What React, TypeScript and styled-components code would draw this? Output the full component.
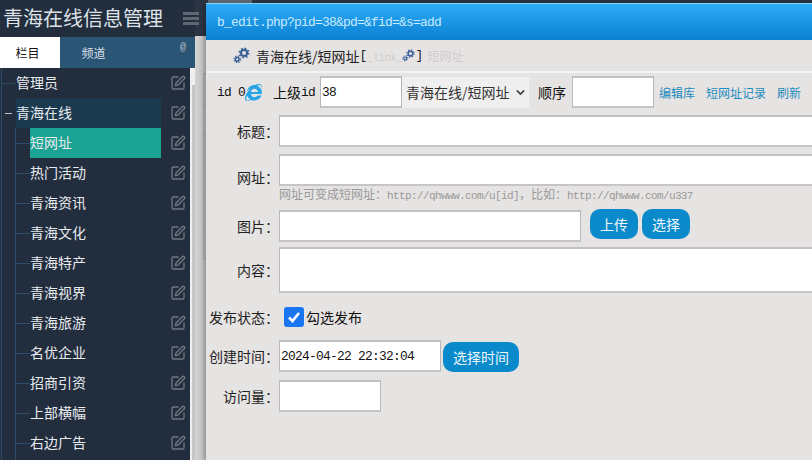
import React from "react";
import styled, { createGlobalStyle } from "styled-components";
import { SquarePen, ChevronDown } from "lucide-react";
import { FaInternetExplorer } from "react-icons/fa";

const cjk = `"Noto Sans CJK SC", "Liberation Sans", sans-serif`;

const Global = createGlobalStyle`
    html, body {
        margin: 0;
        padding: 0;
        width: 812px;
        height: 460px;
        overflow: hidden;
    }
    * { box-sizing: border-box; }
`

const Page = styled.div`
    position: relative;
    display: flex;
    width: 812px;
    height: 460px;
    overflow: hidden;
    font-family: ${ cjk };
    font-size: 14px;
    color: #111;
    background: linear-gradient(180deg, #2b3442 0 36px, #c4c4c4 36px);
`

const Sidebar = styled.div`
    width: 195px;
    flex-shrink: 0;
    display: flex;
    flex-direction: column;
    background: #222d3e;
`

const Brand = styled.div`
    height: 36px;
    display: flex;
    align-items: center;
    justify-content: space-between;
    padding: 0 0 0 3px;
    background: #222d3e;
    color: #dfe3e8;
    font-size: 20px;
    line-height: 34px;
    flex-shrink: 0;
`

const Burger = styled.div`
    width: 16px;
    height: 13px;
    margin-right: 0;
    transform: translateX(4px);
    display: flex;
    flex-direction: column;
    justify-content: space-between;
    span {
        display: block;
        height: 3px;
        background: #5d6672;
    }
`

const Tabs = styled.div`
    height: 31px;
    margin-top: 1px;
    display: flex;
    background: #2b5574;
    position: relative;
    flex-shrink: 0;
`

const Tab = styled.div<{ $on?: boolean }>`
    width: 60px;
    height: 31px;
    display: flex;
    align-items: center;
    justify-content: center;
    font-size: 12px;
    padding: ${ p => p.$on ? "0 5px 0 0" : "0 0 0 7px" };
    background: ${ p => p.$on ? "#fff" : "transparent" };
    color: ${ p => p.$on ? "#111" : "#d5dde4" };
`

const At = styled.span`
    position: absolute;
    right: 9px;
    top: 5px;
    font-size: 10px;
    line-height: 12px;
    font-family: "Liberation Mono", monospace;
    color: #aab8c4;
`

const TreeWrap = styled.div`
    flex: 1;
    display: flex;
    min-height: 0;
`

const Tree = styled.div`
    width: 190px;
    flex-shrink: 0;
    position: relative;
    overflow: hidden;
`

const TreeRow = styled.div`
    height: 30px;
    display: flex;
    align-items: center;
    position: relative;
`

const Line = styled.i<{ $x: number; $w: number; $light?: boolean }>`
    position: absolute;
    left: ${ p => p.$x }px;
    top: 15px;
    width: ${ p => p.$w }px;
    height: 1px;
    background: ${ p => p.$light ? "#b9c2cb" : "#2c4c68" };
`

const Rail = styled.i<{ $x: number; $top: number }>`
    position: absolute;
    left: ${ p => p.$x }px;
    top: ${ p => p.$top }px;
    bottom: 0;
    width: 1px;
    background: #2c4c68;
`

const TreeLabel = styled.div<{ $indent: number; $bg?: string }>`
    margin-left: ${ p => p.$indent }px;
    width: ${ p => 161 - p.$indent }px;
    height: 30px;
    line-height: 29px;
    color: #e8ebee;
    background: ${ p => p.$bg || "transparent" };
`

const EditIcon = styled(SquarePen)`
    position: absolute;
    left: 170px;
    top: 7px;
    color: #6f7782;
`

const Scroll = styled.div`
    width: 5px;
    background: #efefef;
    position: relative;
    &::after {
        content: "";
        position: absolute;
        left: 2px;
        right: 0;
        top: 17px;
        bottom: 0;
        background: #c4c4c4;
    }
`

const Gutter = styled.div`
    width: 11px;
    flex-shrink: 0;
    height: 424px;
    margin-top: 36px;
    padding: 37px 0 0 8px;
    background: linear-gradient(90deg, #d4d4d4, #bcbcbc);
`

const Ghost = styled.div`
    width: 3px;
    height: 186px;
    border: 1px solid #aaa;
    border-right: 0;
    background: repeating-linear-gradient(180deg, transparent 0 30px, #aaa 30px 31px);
`

const Dialog = styled.div`
    position: absolute;
    left: 206px;
    top: 3px;
    width: 800px;
    height: 457px;
    background: #e6e3e3;
    box-shadow: -2px 0 4px rgba(0, 0, 0, .25);
    &::before {
        content: "";
        position: absolute;
        left: 2px;
        top: -3px;
        width: 44px;
        height: 3px;
        background: #5c6672;
    }
`

const TitleBar = styled.div`
    height: 37px;
    border-top: 1px solid #8fd0f8;
    background: linear-gradient(180deg, #2cabf7, #0a80d2);
    color: #c9eaff;
    display: flex;
    align-items: center;
    padding: 1px 0 0 11px;
`

// half-width latin next to the CJK text, like the bitmap font of the page
const Mono = styled.span<{ $size?: number }>`
    font-family: "Liberation Mono", monospace;
    font-size: ${ p => (p.$size || 14) * 0.92 }px;
    letter-spacing: ${ p => -(p.$size || 14) * 0.052 }px;
`

const SubHead = styled.div`
    height: 33px;
    display: flex;
    align-items: center;
    padding-left: 27px;
    border-bottom: 2px solid #f4f3f3;
    color: #222;
    white-space: nowrap;
`

const SubTitle = styled.span`
    margin-left: 6px;
`

const Faint = styled.span<{ $size: number; $gap?: number }>`
    color: #cfcccc;
    font-size: ${ p => p.$size }px;
    margin-left: ${ p => p.$gap || 0 }px;
`

const TopRow = styled.div`
    display: flex;
    align-items: center;
    height: 32px;
    margin-top: 3px;
    padding-left: 11px;
    white-space: nowrap;
`

const Gap = styled.span<{ $gap: number }>`
    margin-left: ${ p => p.$gap }px;
`

const Field = styled.input<{ $w?: number; $gap?: number }>`
    display: block;
    width: ${ p => p.$w ? p.$w + "px" : "560px" };
    height: 32px;
    margin-left: ${ p => p.$gap || 0 }px;
    padding: 0 0 0 1px;
    border: 1px solid #b9b7b7;
    border-top: 2px solid #c2c0c0;
    border-bottom: 2px solid #c6c4c4;
    outline: 0;
    border-radius: 0;
    background: #fff;
    font-family: "Liberation Mono", ${ cjk };
    font-size: 12.88px;
    letter-spacing: -0.73px;
    color: #111;
    flex-shrink: 0;
`

const Area = styled.div<{ $h: number }>`
    width: 560px;
    height: ${ p => p.$h }px;
    background: #fff;
    border: 1px solid #b9b7b7;
    border-top: 2px solid #c2c0c0;
    border-bottom: 2px solid #c6c4c4;
    flex-shrink: 0;
`

const Select = styled.div`
    width: 127px;
    height: 31px;
    background: #f0efef;
    color: #333;
    display: flex;
    align-items: center;
    justify-content: space-between;
    padding: 0 2px 0 4px;
    flex-shrink: 0;
`

const Links = styled.div`
    display: flex;
    margin-left: 5px;
    gap: 11px;
    font-size: 12px;
    color: #1c8cbd;
`

const Form = styled.div`
    display: flex;
    flex-direction: column;
`

const FormRow = styled.div<{ $top: number; $h?: number }>`
    display: flex;
    align-items: center;
    margin-top: ${ p => p.$top }px;
    height: ${ p => p.$h ? p.$h + "px" : "auto" };
`

const Label = styled.label<{ $low?: boolean }>`
    width: 73px;
    text-align: right;
    flex-shrink: 0;
    white-space: nowrap;
    color: #222;
    padding-top: ${ p => p.$low ? 14 : 0 }px;
`

const Hint = styled.div`
    margin: 0 0 0 73px;
    height: 14px;
    line-height: 14px;
    font-size: 12px;
    color: #999;
    white-space: nowrap;
`

const Btn = styled.button<{ $w: number; $gap: number; $low?: boolean }>`
    width: ${ p => p.$w }px;
    height: 30px;
    margin: ${ p => p.$low ? "2px" : "-1px" } 0 0 ${ p => p.$gap }px;
    align-self: flex-start;
    padding: 0;
    border: 0;
    border-radius: 10px;
    background: #0a8acb;
    color: #eef8fd;
    font-family: ${ cjk };
    font-size: 14px;
    flex-shrink: 0;
`

const Check = styled.span`
    width: 20px;
    height: 20px;
    margin: 0 2px 0 5px;
    border-radius: 3px;
    background: #1a75f0;
    display: flex;
    align-items: center;
    justify-content: center;
`

const menu = ["管理员", "青海在线", "短网址", "热门活动", "青海资讯", "青海文化", "青海特产", "青海视界", "青海旅游", "名优企业", "招商引资", "上部横幅", "右边广告"];

const Gears = ({ size }: { size: number }) => (
    <svg width={ size } height={ size } viewBox="0 0 20 20" fill="none" style={{ flexShrink: 0 }}>
        <g stroke="#3a6098">
            <circle cx="13" cy="7" r="3.6" strokeWidth="2.4" />
            <circle cx="13" cy="7" r="5.6" strokeWidth="1.8" strokeDasharray="2 2.4" />
            <circle cx="5" cy="14.5" r="2.2" strokeWidth="1.8" />
            <circle cx="5" cy="14.5" r="3.8" strokeWidth="1.5" strokeDasharray="1.5 1.5" />
        </g>
    </svg>
);

const treeRow = (name: string, i: number) => {
    const top = i < 2;
    const bg = i == 1 ? "#1b3a50" : i == 2 ? "#1aa292" : undefined;
    return (
        <TreeRow key={ name }>
            { top
                ? <Line $x={ i == 1 ? 5 : 2 } $w={ i == 1 ? 7 : 13 } $light={ i == 1 } />
                : <Line $x={ 16 } $w={ 14 } /> }
            <TreeLabel $indent={ top ? 16 : 30 } $bg={ bg }>{ name }</TreeLabel>
            <EditIcon size={ 16 } strokeWidth={ 2 } />
        </TreeRow>
    );
};

export default function App() {
    return (
        <Page>
            <Global />
            <Sidebar>
                <Brand>
                    青海在线信息管理
                    <Burger><span /><span /><span /></Burger>
                </Brand>
                <Tabs>
                    <Tab $on>栏目</Tab>
                    <Tab>频道</Tab>
                    <At>@</At>
                </Tabs>
                <TreeWrap>
                    <Tree>
                        <Rail $x={ 1 } $top={ 0 } />
                        <Rail $x={ 15 } $top={ 60 } />
                        { menu.map(treeRow) }
                    </Tree>
                    <Scroll />
                </TreeWrap>
            </Sidebar>
            <Gutter>
                <Ghost />
            </Gutter>
            <Dialog>
                <TitleBar><Mono>b_edit.php?pid=38&amp;pd=&amp;fid=&amp;s=add</Mono></TitleBar>
                <SubHead>
                    <Gears size={ 17 } />
                    <SubTitle>青海在线/短网址</SubTitle>
                    <Mono>[</Mono>
                    <Faint $size={ 12 }><Mono $size={ 12 }>_link_</Mono></Faint>
                    <Gears size={ 13 } />
                    <Mono>]</Mono>
                    <Faint $size={ 12 } $gap={ 5 }>短网址</Faint>
                </SubHead>
                <TopRow>
                    <Mono>id 0</Mono>
                    <FaInternetExplorer size={ 17 } color="#25a5e8" style={{ flexShrink: 0 }} />
                    <Gap $gap={ 11 }>上级</Gap>
                    <Mono>id</Mono>
                    <Field $w={ 82 } $gap={ 5 } defaultValue="38" />
                    <Select>
                        青海在线/短网址
                        <ChevronDown size={ 13 } strokeWidth={ 3 } color="#444" />
                    </Select>
                    <Gap $gap={ 9 }>顺序</Gap>
                    <Field $w={ 82 } $gap={ 6 } />
                    <Links>
                        <span>编辑库</span>
                        <span>短网址记录</span>
                        <span>刷新</span>
                    </Links>
                </TopRow>
                <Form>
                    <FormRow $top={ 7 }>
                        <Label>标题：</Label>
                        <Field />
                    </FormRow>
                    <FormRow $top={ 6 }>
                        <Label $low>网址：</Label>
                        <Field />
                    </FormRow>
                    <Hint>网址可变成短网址：<Mono $size={ 12 }>http://qhwww.com/u[id]</Mono>，比如：<Mono $size={ 12 }>http://qhwww.com/u337</Mono></Hint>
                    <FormRow $top={ 9 }>
                        <Label>图片：</Label>
                        <Field $w={ 302 } />
                        <Btn $w={ 48 } $gap={ 9 }>上传</Btn>
                        <Btn $w={ 48 } $gap={ 4 }>选择</Btn>
                    </FormRow>
                    <FormRow $top={ 5 }>
                        <Label>内容：</Label>
                        <Area $h={ 46 } />
                    </FormRow>
                    <FormRow $top={ 10 } $h={ 28 }>
                        <Label>发布状态：</Label>
                        <Check>
                            <svg width="14" height="14" viewBox="0 0 14 14" fill="none">
                                <path d="M2 7.5 L5.5 11 L12 3" stroke="#fff" strokeWidth="2.6" />
                            </svg>
                        </Check>
                        勾选发布
                    </FormRow>
                    <FormRow $top={ 9 }>
                        <Label>创建时间：</Label>
                        <Field $w={ 162 } defaultValue="2024-04-22 22:32:04" />
                        <Btn $w={ 76 } $gap={ 2 } $low>选择时间</Btn>
                    </FormRow>
                    <FormRow $top={ 8 }>
                        <Label>访问量：</Label>
                        <Field $w={ 102 } />
                    </FormRow>
                </Form>
            </Dialog>
        </Page>
    );
}
